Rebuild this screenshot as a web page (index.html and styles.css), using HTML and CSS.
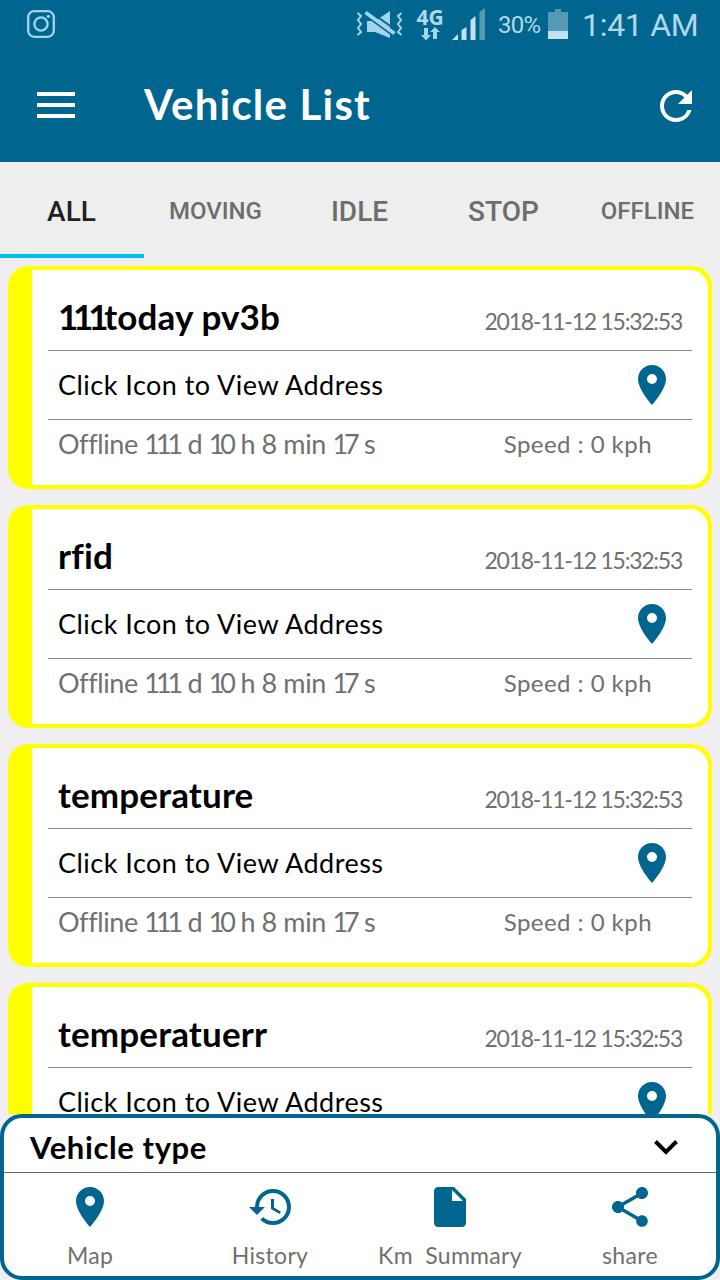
FILE: index.html
```html
<!DOCTYPE html>
<html lang="en">
<head>
  <meta charset="utf-8">
  <title>Vehicle List</title>
  <link rel="stylesheet" href="styles.css">
</head>
<body>
  <svg class="defs" width="0" height="0">
    <symbol id="pin" viewBox="5 2 14 20">
      <path d="M12 2C8.13 2 5 5.13 5 9c0 5.25 7 13 7 13s7-7.75 7-13c0-3.87-3.13-7-7-7zm0 9.5a2.5 2.5 0 0 1 0-5 2.5 2.5 0 0 1 0 5z"/>
    </symbol>
  </svg>

  <div class="status-bar">
    <svg class="insta" width="28" height="28" viewBox="0 0 28 28" fill="none" stroke="#a3d5e8" stroke-width="2.3">
      <rect x="1.2" y="1.2" width="25.6" height="25.6" rx="6"/>
      <circle cx="14" cy="14" r="6.6"/>
      <circle cx="21.4" cy="6.4" r="1.6" fill="#a3d5e8" stroke="none"/>
    </svg>
    <svg class="mute" width="47" height="30" viewBox="0 0 47 30">
      <path d="M11 12h8l15-10v27l-15-6h-8z" fill="#a3d5e8"/>
      <path d="M9 6l30 22M12 1l29 21" stroke="#006690" stroke-width="2"/>
      <path d="M9.500 3.500L38.500 24.500" stroke="#a3d5e8" stroke-width="3.500"/>
      <path d="M1.500 4l3.500 3-3 4 3 4-3 4 3 4-3.500 3M45.500 4l-3.500 3 3 4-3 4 3 4-3 4 3.500 3" fill="none" stroke="#a3d5e8" stroke-width="2"/>
    </svg>
    <div class="network">
      <span>4G</span>
      <svg width="20" height="14" viewBox="0 0 20 14" fill="#a3d5e8">
        <path d="M4 1h4v7h3l-5 5.500L1 8h3zM13 12h4V5h3l-5-5-5 5h3z"/>
      </svg>
    </div>
    <svg class="signal" width="33" height="32" viewBox="0 0 33 32">
      <path d="M0 32l6-6v6zM9.500 22l5-3v13h-5zM18.500 12l5-4v24h-5z" fill="#c3e2ee"/>
      <path d="M27.500 4L33 0v32h-5.500z" fill="#5599b5"/>
    </svg>
    <span class="percent">30%</span>
    <svg class="battery" width="20" height="30" viewBox="0 0 20 30">
      <path d="M0 3h7V0h6v3h7v20H0z" fill="#5599b5"/>
      <path d="M0 22h20v8H0z" fill="#c3e2ee"/>
    </svg>
    <span class="clock">1:41 AM</span>
  </div>

  <div class="header">
    <div class="menu"><i></i><i></i><i></i></div>
    <h1>Vehicle List</h1>
    <svg width="32" height="32" viewBox="4 4 16 16" fill="#fff">
      <path d="M17.650 6.350A7.958 7.958 0 0 0 12 4c-4.420 0-7.990 3.580-7.990 8s3.570 8 7.990 8c3.730 0 6.840-2.550 7.730-6h-2.080A5.990 5.990 0 0 1 12 18c-3.310 0-6-2.690-6-6s2.690-6 6-6c1.660 0 3.140.690 4.220 1.780L13 11h7V4l-2.350 2.350z"/>
    </svg>
  </div>

  <div class="tabs">
    <div class="tab active">ALL</div>
    <div class="tab small">MOVING</div>
    <div class="tab">IDLE</div>
    <div class="tab">STOP</div>
    <div class="tab small">OFFLINE</div>
  </div>

  <div class="list">
    <div class="card">
      <div class="card-body">
        <div class="row top"><b><span class="ones">111</span>today pv3b</b><span class="date">2018-11-12 15:32:53</span></div>
        <div class="row address"><span>Click Icon to View Address</span><svg class="pin"><use href="#pin"/></svg></div>
        <div class="row info"><span class="state">Offline <span class="num">111</span> d <span class="num">10</span> h 8 min <span class="num">17</span> s</span><span class="speed">Speed : 0 kph</span></div>
      </div>
    </div>
    <div class="card">
      <div class="card-body">
        <div class="row top"><b>rfid</b><span class="date">2018-11-12 15:32:53</span></div>
        <div class="row address"><span>Click Icon to View Address</span><svg class="pin"><use href="#pin"/></svg></div>
        <div class="row info"><span class="state">Offline <span class="num">111</span> d <span class="num">10</span> h 8 min <span class="num">17</span> s</span><span class="speed">Speed : 0 kph</span></div>
      </div>
    </div>
    <div class="card">
      <div class="card-body">
        <div class="row top"><b>temperature</b><span class="date">2018-11-12 15:32:53</span></div>
        <div class="row address"><span>Click Icon to View Address</span><svg class="pin"><use href="#pin"/></svg></div>
        <div class="row info"><span class="state">Offline <span class="num">111</span> d <span class="num">10</span> h 8 min <span class="num">17</span> s</span><span class="speed">Speed : 0 kph</span></div>
      </div>
    </div>
    <div class="card">
      <div class="card-body">
        <div class="row top"><b>temperatuerr</b><span class="date">2018-11-12 15:32:53</span></div>
        <div class="row address"><span>Click Icon to View Address</span><svg class="pin"><use href="#pin"/></svg></div>
      </div>
    </div>
  </div>

  <div class="bottom">
    <div class="type">
      <b>Vehicle type</b>
      <svg width="24" height="15" viewBox="0 0 24 15" fill="none" stroke="#000" stroke-width="4">
        <path d="M1.500 1.500L12 12 22.500 1.500"/>
      </svg>
    </div>
    <div class="actions">
      <div class="action">
        <svg class="pin"><use href="#pin"/></svg>
        <span>Map</span>
      </div>
      <div class="action">
        <svg width="42" height="40" viewBox="1 2 21 20">
          <path d="M13 3a9 9 0 0 0-9 9H1l3.890 3.890.070.140L9 12H6c0-3.870 3.130-7 7-7s7 3.130 7 7-3.130 7-7 7c-1.930 0-3.680-.790-4.940-2.060l-1.420 1.420A8.954 8.954 0 0 0 13 21a9 9 0 0 0 0-18zm-1 5v5l4.280 2.540.720-1.210-3.500-2.080V8H12z"/>
        </svg>
        <span>History</span>
      </div>
      <div class="action">
        <svg width="32" height="40" viewBox="4 2 16 20">
          <path d="M6 2c-1.100 0-1.990.900-1.990 2L4 20c0 1.100.890 2 1.990 2H18c1.100 0 2-.900 2-2V8l-6-6H6zm7 7V3.500L18.500 9H13z"/>
        </svg>
        <span>Km&nbsp; Summary</span>
      </div>
      <div class="action">
        <svg width="36" height="40" viewBox="3 2 18 20">
          <path d="M18 16.080c-.760 0-1.440.300-1.960.770L8.910 12.700c.050-.230.090-.460.090-.700s-.040-.470-.090-.700l7.050-4.110c.540.500 1.250.810 2.040.810 1.660 0 3-1.340 3-3s-1.340-3-3-3-3 1.340-3 3c0 .240.040.470.090.700L8.040 9.810C7.500 9.310 6.790 9 6 9c-1.660 0-3 1.340-3 3s1.340 3 3 3c.790 0 1.500-.310 2.040-.810l7.120 4.160c-.050.210-.080.430-.080.650 0 1.610 1.310 2.920 2.920 2.920s2.920-1.310 2.920-2.920-1.310-2.920-2.920-2.920z"/>
        </svg>
        <span>share</span>
      </div>
    </div>
  </div>
</body>
</html>
```

FILE: styles.css
```css
* {
  box-sizing: border-box;
}

body {
  margin: 0;
  height: 1280px;
  overflow: hidden;
  display: flex;
  flex-direction: column;
  background-color: #efeef0;
  font-family: Lato, "Open Sans", sans-serif;
  white-space: nowrap;
}

.defs {
  position: absolute;
}

svg {
  flex-shrink: 0;
}

.status-bar {
  height: 50px;
  flex-shrink: 0;
  display: flex;
  align-items: center;
  padding: 0 22px 0 27px;
  background-color: #006690;
  color: #b0d8e8;
  font-family: Roboto, sans-serif;
}

.insta {
  margin: -2px auto 0 0;
}

.mute {
  margin-top: -2px;
}

.network {
  width: 28px;
  margin: -2px 0 0 13px;
  display: flex;
  flex-direction: column;
  align-items: center;
}

.network span {
  font: bold 21px/19px "Open Sans", sans-serif;
}

.signal {
  margin: -2px 13px 0 8px;
}

.percent {
  width: 43px;
  font-size: 24px;
  letter-spacing: -0.8px;
}

.battery {
  margin: -3px 14px 0 7px;
}

.clock {
  width: 116px;
  font-size: 32px;
  letter-spacing: -0.3px;
}

.header {
  height: 112px;
  flex-shrink: 0;
  display: flex;
  align-items: center;
  padding: 0 28px 0 37px;
  background-color: #006690;
  color: #fff;
}

.menu {
  width: 38px;
  height: 26px;
  margin: -2px 69px 0 0;
  display: flex;
  flex-direction: column;
  justify-content: space-between;
}

.menu i {
  height: 4px;
  background-color: #fff;
}

h1 {
  flex: 1;
  margin: -5px 0 0;
  font-size: 42px;
  letter-spacing: 1.2px;
}

.tabs {
  height: 96px;
  flex-shrink: 0;
  display: grid;
  grid-template-columns: repeat(5, 1fr);
  background-color: #eee;
}

.tab {
  padding: 6px 1px 0 0;
  border-bottom: 4px solid transparent;
  display: flex;
  align-items: center;
  justify-content: center;
  font: 500 28px Roboto, sans-serif;
  color: #6d6d6d;
}

.tab.small {
  font-size: 24px;
}

.tab.active {
  color: #212121;
  border-color: #00bff3;
}

.list {
  height: 856px;
  flex-shrink: 0;
  padding: 8px 8px 0;
  overflow: hidden;
}

.card {
  height: 223px;
  margin-bottom: 16px;
  padding: 4px 4px 4px 24px;
  border-radius: 20px;
  background-color: #ff0;
}

.card-body {
  height: 215px;
  padding: 0 16px;
  border-radius: 0 18px 18px 0;
  background-color: #fff;
}

.row {
  display: flex;
  align-items: center;
  justify-content: space-between;
  padding-left: 10px;
}

.top {
  height: 81px;
  padding-top: 11px;
  padding-right: 10px;
  border-bottom: 1px solid #888;
}

.top b {
  font-size: 35px;
  letter-spacing: 0.15px;
}

.top .ones {
  margin-right: 1px;
  letter-spacing: -5.2px;
}

.date {
  margin-top: 10px;
  font-size: 23px;
  letter-spacing: -1.25px;
  color: #707070;
}

.address {
  height: 69px;
  padding-right: 26px;
  border-bottom: 1px solid #888;
  font-size: 27px;
}

.address span {
  margin-top: -2px;
  letter-spacing: 0.48px;
}

.pin {
  width: 28px;
  height: 40px;
  fill: #006690;
}

.info {
  height: 49px;
  padding: 0 40px 3px 10px;
  font-size: 27px;
  color: #707070;
}

.state {
  letter-spacing: -0.4px;
}

.info .num {
  margin-right: 2px;
  letter-spacing: -4.1px;
}

.speed {
  font-size: 24px;
  letter-spacing: 0.45px;
}

.bottom {
  height: 166px;
  flex-shrink: 0;
  border: 4px solid #006690;
  border-radius: 22px;
  background-color: #fff;
}

.type {
  height: 55px;
  display: flex;
  align-items: center;
  justify-content: space-between;
  padding: 4px 38px 0 26px;
  border-bottom: 1px solid #666;
  font-size: 31px;
  letter-spacing: 0.6px;
}

.actions {
  display: grid;
  grid-template-columns: repeat(4, 1fr);
  margin: 0 -4px;
}

.action {
  display: flex;
  flex-direction: column;
  align-items: center;
  height: 103px;
  padding-top: 14px;
  color: #707070;
  font-size: 23px;
  letter-spacing: 0.3px;
}

.action svg {
  fill: #006690;
}

.action span {
  margin-top: auto;
  padding-bottom: 7px;
}
```
